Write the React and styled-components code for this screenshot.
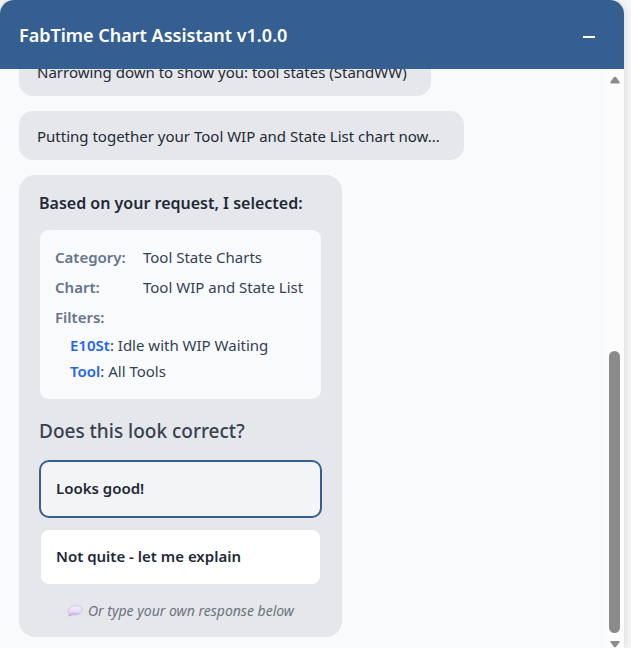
import React from 'react'
import { useState } from 'react'
import { styled, createGlobalStyle } from 'styled-components'

const messages = [
    'Narrowing down to show you: tool states (StandWW)',
    'Putting together your Tool WIP and State List chart now...',
]

const details = [
    { label: 'Category:', value: 'Tool State Charts' },
    { label: 'Chart:', value: 'Tool WIP and State List' },
]

const filters = [
    { name: 'E10St', value: 'Idle with WIP Waiting' },
    { name: 'Tool', value: 'All Tools' },
]

const options = ['Looks good!', 'Not quite - let me explain']

const SpeechIcon = () => (
    <svg width="16" height="12" viewBox="0 0 16 12" aria-hidden="true">
        <defs>
            <linearGradient id="speech" x1="0" y1="0" x2="0" y2="1">
                <stop offset="0" stopColor="#f6f0fb" />
                <stop offset="0.6" stopColor="#e6daf2" />
                <stop offset="1" stopColor="#b9a1d6" />
            </linearGradient>
        </defs>
        <path
            d="M8.4 .8C12.3 .3 15.2 2 15.2 4.6c0 3-3.2 5.3-7.2 5.4-1 0-1.900-.1-2.700-.3-1 .8-2.400 1.300-4 1.300.7-.7 1-1.500 1-2.500C1.300 7.700.9 6.800.9 5.900 1 3.300 4.200 1.200 8.400.8z"
            fill="url(#speech)"
            stroke="#c2aedb"
            strokeWidth="0.6"
        />
    </svg>
)

const ScrollArrow = ({ down }) => (
    <svg width="10" height="8" viewBox="0 0 10 8" aria-hidden="true">
        <path
            d={down ? 'M.4 1h9.200v1L6.200 6.700q-1.200 1.300-2.400 0L.4 2z' : 'M.4 7.500h9.200V6L6.200 1.300q-1.200-1.300-2.400 0L.4 6z'}
            fill="#8b8b8b"
        />
    </svg>
)

export default function App() {
    const [selected, setSelected] = useState(options[0])

    return (
        <>
            <GlobalStyle />
            <Panel>
                <Header>
                    <Title>FabTime Chart Assistant v1.0.0</Title>
                    <MinimizeButton type='button' aria-label='Minimize'>
                        <svg width="12" height="2" viewBox="0 0 12 2" aria-hidden="true">
                            <rect width="12" height="2" fill="#fff" />
                        </svg>
                    </MinimizeButton>
                </Header>
                <Body>
                    <Messages>
                        {messages.map((text) => <Bubble key={text}>{text}</Bubble>)}
                        <Card>
                            <CardTitle>Based on your request, I selected:</CardTitle>
                            <Summary>
                                {details.map(({ label, value }) => (
                                    <SummaryRow key={label}>
                                        <Label>{label}</Label>
                                        <span>{value}</span>
                                    </SummaryRow>
                                ))}
                                <Label>Filters:</Label>
                                <FilterList>
                                    {filters.map(({ name, value }) => (
                                        <li key={name}><FilterName>{name}</FilterName>: {value}</li>
                                    ))}
                                </FilterList>
                            </Summary>
                            <Question>Does this look correct?</Question>
                            <Options>
                                {options.map((option) => (
                                    <OptionButton
                                        key={option}
                                        type='button'
                                        $active={option === selected}
                                        onClick={() => setSelected(option)}
                                    >
                                        {option}
                                    </OptionButton>
                                ))}
                            </Options>
                            <Hint><SpeechIcon />Or type your own response below</Hint>
                        </Card>
                    </Messages>
                    <Scrollbar aria-hidden="true">
                        <ScrollArrow />
                        <Track><Thumb /></Track>
                        <ScrollArrow down />
                    </Scrollbar>
                </Body>
            </Panel>
        </>
    )
}

const GlobalStyle = createGlobalStyle`
    * {
        box-sizing: border-box;
    }
    body {
        margin: 0;
        background: #f5f5f5;
        color: #1f2937;
        font-family: 'Noto Sans', 'Open Sans', sans-serif;
        font-size: 15px;
        line-height: 24px;
    }
`

const Panel = styled.main`
    display: flex;
    flex-direction: column;
    height: 100vh;
    margin-right: 7px;
    border-radius: 14px 14px 0 0;
    background: #f9fafc;
    box-shadow: 0 0 10px rgba(0, 0, 0, .12);
    overflow: hidden;
`

const Header = styled.header`
    display: flex;
    align-items: center;
    justify-content: space-between;
    flex-shrink: 0;
    padding: 21px 19px 20px;
    background: #365f91;
    color: #fff;
`

const Title = styled.h1`
    margin: 0;
    font-size: 18px;
    font-weight: 600;
    line-height: 28px;
`

const MinimizeButton = styled.button`
    display: flex;
    align-items: center;
    justify-content: center;
    width: 32px;
    height: 28px;
    padding: 4px 0 0;
    border: none;
    background: none;
    cursor: pointer;
`

const Body = styled.div`
    display: flex;
    flex: 1;
    min-height: 0;
`

const Messages = styled.section`
    display: flex;
    flex: 1;
    flex-direction: column;
    align-items: flex-start;
    justify-content: flex-end;
    gap: 15px;
    min-width: 0;
    padding: 0 19px 11px;
    overflow: hidden;
`

const Bubble = styled.p`
    flex-shrink: 0;
    margin: 0;
    padding: 13px 24px 12px 18px;
    border-radius: 14px;
    background: #e5e7eb;
`

const Card = styled.article`
    flex-shrink: 0;
    min-width: 323px;
    padding: 14px 20px;
    border-radius: 16px;
    background: #e5e7eb;
`

const CardTitle = styled.h2`
    margin: 0 0 12px;
    font-size: 16px;
    font-weight: 600;
    line-height: 28px;
`

const Summary = styled.div`
    padding: 15px;
    border: 1px solid #e2e8f0;
    border-radius: 10px;
    background: #f9fafc;
    color: #334155;
`

const SummaryRow = styled.div`
    display: flex;
    margin-bottom: 6px;
`

const Label = styled.span`
    width: 88px;
    flex-shrink: 0;
    color: #64748b;
    font-weight: 600;
`

const FilterList = styled.ul`
    margin: 3px 0 0;
    padding: 0 0 0 15px;
    line-height: 26px;
    list-style: none;
`

const FilterName = styled.span`
    color: #2563eb;
    font-weight: 600;
`

const Question = styled.h3`
    margin: 17px 0 15px;
    color: #374151;
    font-size: 19px;
    font-weight: 500;
    line-height: 28px;
`

const Options = styled.div`
    display: flex;
    flex-direction: column;
    gap: 10px;
`

const OptionButton = styled.button`
    padding: 14px 15px 16px;
    border: 2px solid ${({ $active }) => $active ? '#365f91' : '#e5e7eb'};
    border-radius: 10px;
    background: ${({ $active }) => $active ? '#f3f4f6' : '#fff'};
    color: #1f2937;
    font: inherit;
    font-weight: 600;
    text-align: left;
    cursor: pointer;
`

const Hint = styled.p`
    display: flex;
    align-items: center;
    justify-content: center;
    gap: 5px;
    margin: 13px 0 0;
    color: #6b7280;
    font-size: 14px;
    font-style: italic;
`

const Scrollbar = styled.div`
    display: flex;
    flex-direction: column;
    align-items: center;
    flex-shrink: 0;
    width: 19px;
    padding-top: 7px;
    background: #fcfcfc;
`

const Track = styled.div`
    display: flex;
    flex: 1;
    align-items: flex-end;
    padding: 6px 0 7px;
`

const Thumb = styled.div`
    width: 11px;
    height: 52%;
    border-radius: 6px;
    background: #8b8b8b;
`
